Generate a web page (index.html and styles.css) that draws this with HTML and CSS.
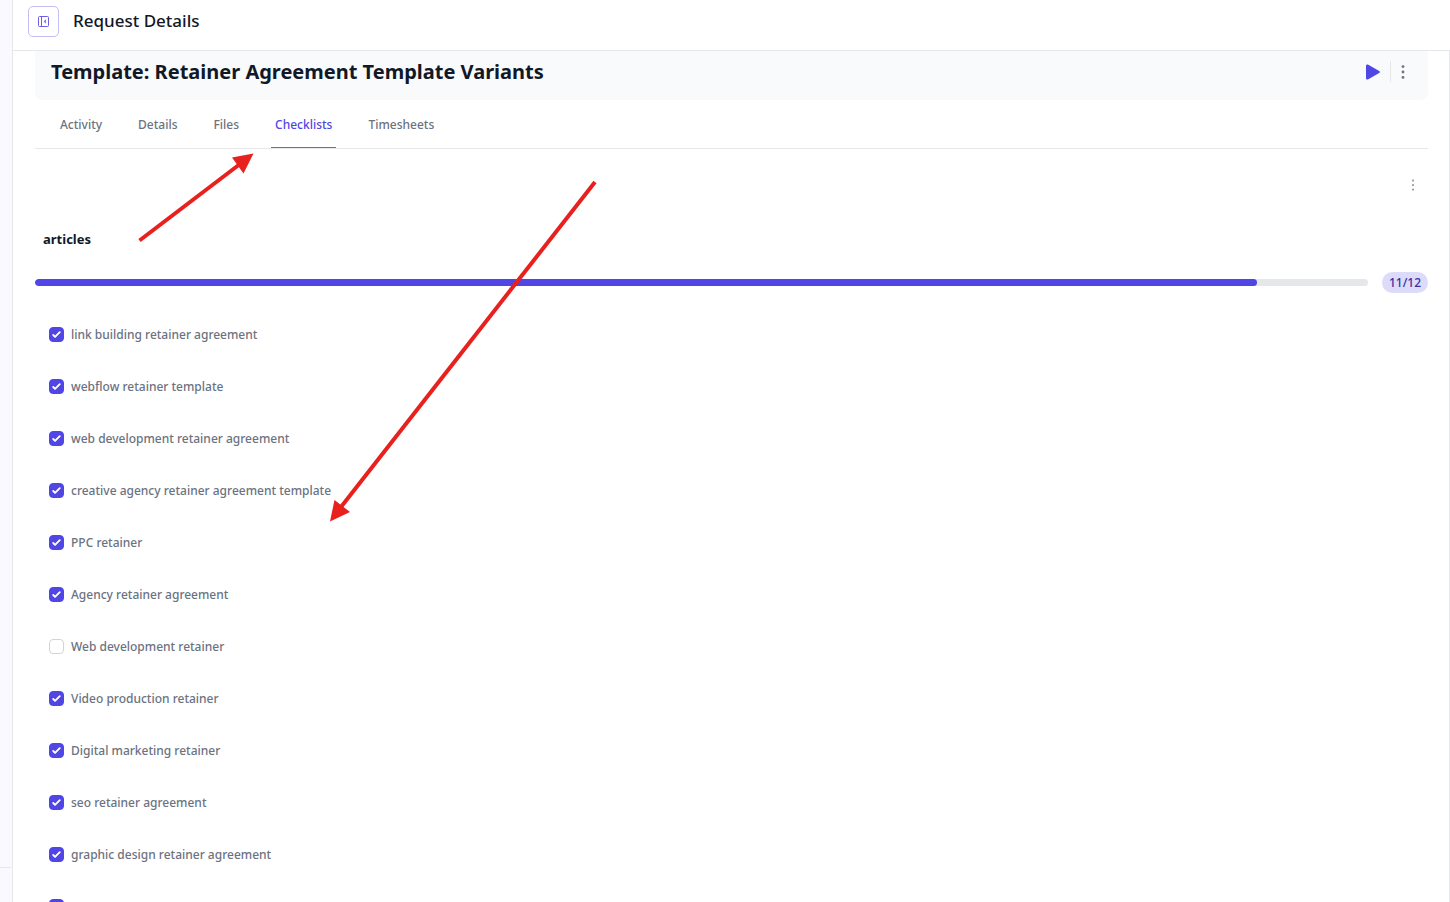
FILE: index.html
```html
<!DOCTYPE html>
<html lang="en">
<head>
<meta charset="utf-8">
<title>Request Details</title>
<link rel="stylesheet" href="styles.css">
</head>
<body>
<div class="app">
  <aside class="sidebar"><div class="sidebar-footer"></div></aside>
  <div class="page">
    <header class="topbar">
      <button class="collapse" type="button" aria-label="Collapse sidebar">
        <svg width="11" height="11" viewBox="0 0 11 11" fill="none" stroke="currentColor"><rect x="0.5" y="0.5" width="10" height="10" rx="1"/><path d="M3.500 0.500v10"/><path d="M7.500 3.800L6.300 5.500l1.200 1.700z" fill="currentColor" stroke-width="0.600"/></svg>
      </button>
      <h1 class="page-title">Request Details</h1>
    </header>
    <main class="content">
      <div class="banner">
        <h2 class="banner-title">Template: Retainer Agreement Template Variants</h2>
        <div class="banner-actions">
          <button class="icon-button play" type="button" aria-label="Start timer">
            <svg width="14" height="16" viewBox="0 0 14 16" fill="currentColor"><path d="M0 2C0 .5 1.100 0 2.300.700L13.200 6.900c.9.500.9 1.700 0 2.200L2.300 15.300C1.100 16 0 15.500 0 14z"/></svg>
          </button>
          <span class="divider"></span>
          <button class="icon-button more" type="button" aria-label="More options">
            <svg width="4" height="14" viewBox="0 0 4 14" fill="currentColor"><circle cx="2" cy="1.600" r="1.400"/><circle cx="2" cy="7" r="1.400"/><circle cx="2" cy="12.400" r="1.400"/></svg>
          </button>
        </div>
      </div>
      <nav class="tabs">
        <a class="tab" href="#">Activity</a>
        <a class="tab" href="#">Details</a>
        <a class="tab" href="#">Files</a>
        <a class="tab active" href="#">Checklists</a>
        <a class="tab" href="#">Timesheets</a>
      </nav>
      <section class="checklist">
        <div class="checklist-tools">
          <button class="icon-button small" type="button" aria-label="Checklist options">
            <svg width="2" height="12" viewBox="0 0 2 12" fill="currentColor"><rect y="0.500" width="2" height="2" rx="0.500"/><rect y="5" width="2" height="2" rx="0.500"/><rect y="9.500" width="2" height="2" rx="0.500"/></svg>
          </button>
        </div>
        <h3 class="checklist-title">articles</h3>
        <div class="progress-row">
          <div class="track"><div class="fill" style="width:91.67%"></div></div>
          <span class="count">11/12</span>
        </div>
        <div class="items">
          <label class="item"><input type="checkbox" checked><span>link building retainer agreement</span></label>
          <label class="item"><input type="checkbox" checked><span>webflow retainer template</span></label>
          <label class="item"><input type="checkbox" checked><span>web development retainer agreement</span></label>
          <label class="item"><input type="checkbox" checked><span>creative agency retainer agreement template</span></label>
          <label class="item"><input type="checkbox" checked><span>PPC retainer</span></label>
          <label class="item"><input type="checkbox" checked><span>Agency retainer agreement</span></label>
          <label class="item"><input type="checkbox"><span>Web development retainer</span></label>
          <label class="item"><input type="checkbox" checked><span>Video production retainer</span></label>
          <label class="item"><input type="checkbox" checked><span>Digital marketing retainer</span></label>
          <label class="item"><input type="checkbox" checked><span>seo retainer agreement</span></label>
          <label class="item"><input type="checkbox" checked><span>graphic design retainer agreement</span></label>
          <div class="item"><input type="checkbox" checked aria-label="Checklist item"></div>
        </div>
      </section>
    </main>
  </div>
  <svg class="arrows" width="620" height="540" viewBox="0 0 620 540" aria-hidden="true">
    <g stroke="#e8201e" stroke-width="4"><path d="M139.500 240.500L240 164"/><path d="M595 182L341 507"/></g>
    <g fill="#e8201e"><path d="M253.500 153.500L232 157.500L243.500 173.500z"/><path d="M330 521.500L334.500 500L350 512z"/></g>
  </svg>
</div>
</body>
</html>
```
FILE: styles.css
```css
* { box-sizing: border-box; }
body {
  margin: 0;
  font-family: "Noto Sans", "Open Sans", sans-serif;
  font-size: 12px;
  color: #6b7280;
  background: #fff;
}
h1, h2, h3 { margin: 0; }
button { padding: 0; border: 0; background: none; cursor: pointer; }
svg { display: block; }
.app {
  position: relative;
  display: flex;
  height: 100vh;
  overflow: hidden;
}
.sidebar {
  display: flex;
  flex: none;
  flex-direction: column;
  justify-content: flex-end;
  width: 13px;
  padding-right: 1px;
  background: #faf9ff;
  border-right: 1px solid #e5e7eb;
}
.sidebar-footer { height: 35px; border-top: 1px solid #e5e7eb; }
.page { display: flex; flex: 1; flex-direction: column; min-width: 0; }
.topbar {
  display: flex;
  flex: none;
  align-items: center;
  gap: 14px;
  height: 51px;
  padding: 0 15px 8px;
  border-bottom: 1px solid #e5e7eb;
}
.collapse {
  display: flex;
  align-items: center;
  justify-content: center;
  width: 31px;
  height: 31px;
  color: #6d5fe8;
  border: 1px solid #c4bdf5;
  border-radius: 5px;
}
.page-title { font-size: 17px; font-weight: 500; line-height: 24px; color: #111827; }
.content { flex: 1; padding: 0 21px 0 22px; border-right: 1px solid #e5e7eb; }
.banner {
  display: flex;
  align-items: center;
  justify-content: space-between;
  height: 49px;
  padding: 0 23px 8px 16px;
  background: #f9fafc;
  border-radius: 0 0 7px 7px;
}
.banner-title { font-size: 20px; font-weight: 700; line-height: 28px; color: #111827; }
.banner-actions { display: flex; align-items: center; gap: 10px; }
.play { color: #4f46e5; }
.divider { width: 1px; height: 21px; background: #e5e7eb; }
.more { color: #6b7280; }
.tabs {
  display: flex;
  gap: 28px;
  height: 49px;
  padding: 0 21px;
  border-bottom: 1px solid #e5e7eb;
}
.tab {
  padding: 0 4px;
  font-weight: 500;
  line-height: 49px;
  color: #6b7280;
  text-decoration: none;
}
.tab.active { color: #4f46e5; border-bottom: 1px solid #6366f1; }
.checklist-tools { display: flex; justify-content: flex-end; padding: 30px 14px 0; }
.small { color: #9ca3af; }
.checklist-title { padding: 38px 8px 0; font-size: 13px; font-weight: 700; line-height: 20px; color: #111827; }
.progress-row { display: flex; align-items: center; gap: 14px; padding-top: 23px; }
.track { flex: 1; height: 7px; overflow: hidden; background: #e5e7eb; border-radius: 4px; }
.fill { height: 100%; background: #4f46e5; border-radius: 4px; }
.count {
  width: 46px;
  font-weight: 500;
  line-height: 21px;
  color: #3730a3;
  text-align: center;
  background: #dddbfa;
  border-radius: 11px;
}
.items { padding: 15px 14px 0; }
.item { display: flex; align-items: center; gap: 7px; height: 52px; font-weight: 500; }
.item input {
  flex: none;
  width: 15px;
  height: 15px;
  margin: 0;
  appearance: none;
  background: #fff;
  border: 1px solid #d1d5db;
  border-radius: 4px;
}
.item input:checked {
  background: #4f46e5 url("data:image/svg+xml,%3Csvg viewBox='0 0 16 16' fill='white' xmlns='http://www.w3.org/2000/svg'%3E%3Cpath d='M12.207 4.793a1 1 0 010 1.414l-5 5a1 1 0 01-1.414 0l-2-2a1 1 0 011.414-1.414L6.500 9.086l4.293-4.293a1 1 0 011.414 0z'/%3E%3C/svg%3E") center / 15px no-repeat;
  border-color: #4f46e5;
}
.arrows { position: absolute; top: 0; left: 0; pointer-events: none; }
```
